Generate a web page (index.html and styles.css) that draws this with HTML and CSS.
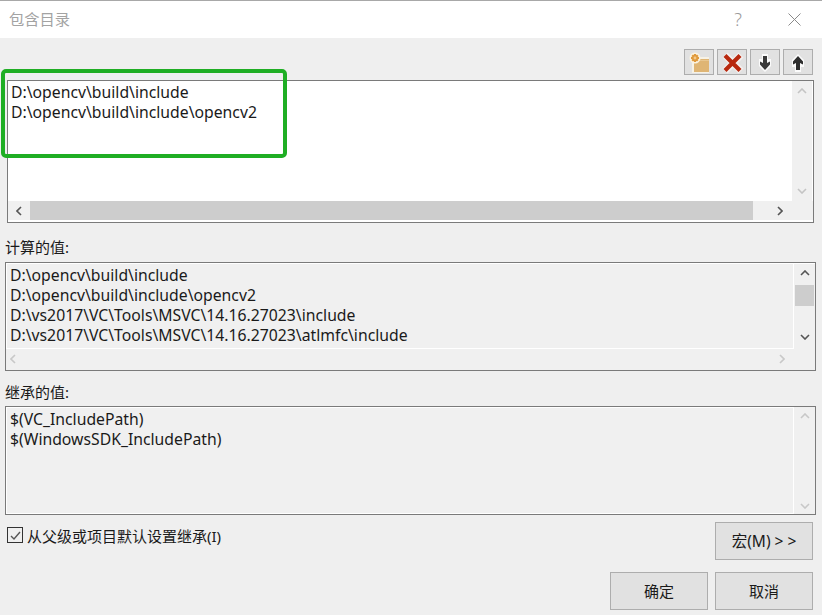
FILE: index.html
```html
<!DOCTYPE html>
<html lang="zh">
<head>
<meta charset="utf-8">
<title>包含目录</title>
<link rel="stylesheet" href="styles.css">
</head>
<body>
<div class="dialog">
  <header class="titlebar">
    <span class="title">包含目录</span>
    <span class="help">?</span>
    <svg class="close" width="13" height="13" viewBox="0 0 13 13"><path d="M0.500 0.500L12.500 12.500M12.500 0.500L0.500 12.500" stroke="#8a8a8a" stroke-width="1" fill="none"/></svg>
  </header>
  <main class="content">
    <div class="toolbar">
      <button class="tool"><svg width="28" height="24" viewBox="0 0 28 24"><path d="M7 7h17v16H7z" fill="#f7f2e6"/><path d="M9 9h15v13H9z" fill="#dfb574"/><path d="M8 8h6l2 2h8v1H8z" fill="#e8c68f"/><circle cx="10" cy="8" r="5.500" fill="#fbf3e2"/><g stroke="#e09a3c" stroke-width="2.200"><path d="M10 4v8M6 8h8M7.200 5.200l5.600 5.600M12.800 5.200l-5.600 5.600"/></g><circle cx="10" cy="8" r="1.400" fill="#f3c98a"/></svg></button>
      <button class="tool"><svg width="28" height="24" viewBox="0 0 28 24"><path d="M7 5L23 21M23 5L7 21" stroke="#f4f1f0" stroke-width="7" fill="none"/><path d="M7 5.500L22 20.500M22 5.500L7 20.500" stroke="#b8290f" stroke-width="4.200" fill="none"/></svg></button>
      <button class="tool"><svg width="28" height="24" viewBox="0 0 28 24"><path d="M11 4h6v5h3v7l-6 6-6-6V9h3z" fill="#fbfbfb"/><path d="M12 6h4v7l3-1.500v3L14 20l-5-5.500v-3l3 1.500z" fill="#3a3a3a"/></svg></button>
      <button class="tool"><svg width="28" height="24" viewBox="0 0 28 24"><path d="M11 22h6v-5h3v-7l-6-6-6 6v7h3z" fill="#fbfbfb"/><path d="M12 20h4v-7l3 1.500v-3L14 6l-5 5.500v3l3-1.500z" fill="#2e2e2e"/></svg></button>
    </div>

    <section class="list list-edit">
      <div class="list-main">
        <div class="list-text">
          <div class="line">D:\opencv\build\include</div>
          <div class="line">D:\opencv\build\include\opencv2</div>
        </div>
        <div class="vbar">
          <svg class="arrow" width="10" height="6" viewBox="0 0 10 6"><path d="M1 5l4-4 4 4" stroke="#c4c4c4" stroke-width="1.600" fill="none"/></svg>
          <svg class="arrow" width="10" height="6" viewBox="0 0 10 6"><path d="M1 1l4 4 4-4" stroke="#c4c4c4" stroke-width="1.600" fill="none"/></svg>
        </div>
      </div>
      <div class="hbar">
        <span class="hbtn"><svg width="6" height="10" viewBox="0 0 6 10"><path d="M5 1L1 5l4 4" stroke="#555" stroke-width="1.600" fill="none"/></svg></span>
        <span class="hthumb"></span>
        <span class="hrest"><svg width="6" height="10" viewBox="0 0 6 10"><path d="M1 1l4 4-4 4" stroke="#555" stroke-width="1.600" fill="none"/></svg></span>
      </div>
    </section>

    <div class="label label-computed">计算的值:</div>
    <section class="list list-read">
      <div class="list-main list-main-read">
        <div class="list-text">
          <div class="line">D:\opencv\build\include</div>
          <div class="line">D:\opencv\build\include\opencv2</div>
          <div class="line">D:\vs2017\VC\Tools\MSVC\14.16.27023\include</div>
          <div class="line">D:\vs2017\VC\Tools\MSVC\14.16.27023\atlmfc\include</div>
        </div>
        <div class="vbar vbar-read">
          <svg class="arrow" width="10" height="6" viewBox="0 0 10 6"><path d="M1 5l4-4 4 4" stroke="#555" stroke-width="1.600" fill="none"/></svg>
          <span class="vthumb"></span>
          <svg class="arrow arrow-down" width="10" height="6" viewBox="0 0 10 6"><path d="M1 1l4 4 4-4" stroke="#555" stroke-width="1.600" fill="none"/></svg>
        </div>
      </div>
      <div class="hbar hbar-read">
        <svg width="6" height="10" viewBox="0 0 6 10"><path d="M5 1L1 5l4 4" stroke="#c8c8c8" stroke-width="1.600" fill="none"/></svg>
        <svg width="6" height="10" viewBox="0 0 6 10"><path d="M1 1l4 4-4 4" stroke="#c8c8c8" stroke-width="1.600" fill="none"/></svg>
      </div>
    </section>

    <div class="label label-inherited">继承的值:</div>
    <section class="list list-inherit">
      <div class="list-text">
        <div class="line">$(VC_IncludePath)</div>
        <div class="line">$(WindowsSDK_IncludePath)</div>
      </div>
      <div class="vbar vbar-inherit">
        <svg class="arrow" width="10" height="6" viewBox="0 0 10 6"><path d="M1 5l4-4 4 4" stroke="#c8c8c8" stroke-width="1.600" fill="none"/></svg>
        <svg class="arrow" width="10" height="6" viewBox="0 0 10 6"><path d="M1 1l4 4 4-4" stroke="#c8c8c8" stroke-width="1.600" fill="none"/></svg>
      </div>
    </section>

    <div class="footer">
      <label class="check">
        <span class="box"><svg width="13" height="13" viewBox="0 0 13 13"><path d="M2 7l3 3 6-7" stroke="#555" stroke-width="1.400" fill="none"/></svg></span>
        <span>从父级或项目默认设置继承(I)</span>
      </label>
      <button class="btn btn-macro">宏(M) &gt; &gt;</button>
    </div>
    <div class="actions">
      <button class="btn">确定</button>
      <button class="btn">取消</button>
    </div>
  </main>
  <div class="annotation"></div>
</div>
</body>
</html>
```
FILE: styles.css
```css
* { box-sizing: border-box; }
html, body { margin: 0; padding: 0; }
body {
  width: 822px;
  height: 615px;
  overflow: hidden;
  background: #efefef;
  font-family: "Noto Sans", "Noto Sans CJK SC", sans-serif;
  font-size: 15.75px;
  color: #1a1a1a;
}
.dialog { position: relative; width: 822px; height: 615px; display: flex; flex-direction: column; }
.titlebar {
  height: 38px;
  flex: none;
  background: #fff;
  border-top: 1px solid #a8a8a8;
  display: flex;
  align-items: center;
  padding: 0 21px 1px 9px;
}
.title { font-family: "Noto Sans CJK SC", sans-serif; font-size: 15.250px; color: #a3a3a3; flex: 1; margin-bottom: 2px; }
.help { color: #9a9a9a; font-size: 18px; font-weight: 300; margin-right: 46px; }
.content { flex: 1; display: flex; flex-direction: column; padding: 11px 7px 0 5px; }
.toolbar { display: flex; justify-content: flex-end; gap: 3px; height: 26px; margin-right: 2px; }
.tool {
  width: 30px;
  height: 26px;
  padding: 0;
  background: #e1e1e1;
  border: 1px solid #adadad;
  display: flex;
  align-items: center;
  justify-content: center;
}
.list { border: 1px solid #7a7a7a; display: flex; flex-direction: column; }
.list-edit { height: 143px; margin: 5px 1px 0 2px; background: #f0f0f0; }
.list-main { flex: 1; display: flex; min-height: 0; }
.list-text { flex: 1; padding: 2px 3px; background: #fff; line-height: 20px; }
.list-edit .list-text { padding-top: 1px; }
.line { white-space: nowrap; height: 20px; }
.vbar {
  width: 21px;
  flex: none;
  background: #f0f0f0;
  display: flex;
  flex-direction: column;
  align-items: center;
  justify-content: space-between;
  padding: 7px 0;
}
.list-edit .vbar { border-right: 1px solid #fff; }
.hbar { height: 21px; flex: none; display: flex; align-items: flex-start; background: #f0f0f0; border-bottom: 2px solid #fff; }
.hbtn { width: 22px; height: 19px; flex: none; display: flex; justify-content: center; align-items: center; }
.hthumb { width: 723px; height: 19px; flex: none; background: #cdcdcd; }
.hrest { flex: 1; height: 19px; display: flex; justify-content: center; align-items: center; padding-right: 6px; }
.label { font-size: 15px; line-height: 20px; }
.label-computed { margin-top: 14px; }
.label-inherited { margin-top: 11px; }
.list-read { height: 109px; margin-top: 5px; background: #f0f0f0; width: 811px; }
.list-main-read { border: 1px solid #fff; border-width: 1px 0 0 1px; }
.list-main-read .list-text { background: #f0f0f0; border-right: 1px solid #fff; border-bottom: 1px solid #fff; padding: 1px 3px; overflow: hidden; }
.vbar-read { width: 21px; padding: 6px 0 0; justify-content: flex-start; }
.vthumb { width: 19px; height: 21px; background: #cdcdcd; margin-top: 9px; }
.arrow-down { margin-top: 28px; }
.hbar-read { height: 21px; align-items: center; justify-content: space-between; padding: 0 30px 0 4px; border-bottom: 1px solid #f0f0f0; }
.list-inherit { height: 109px; margin-top: 4px; width: 811px; flex-direction: row; background: #f0f0f0; }
.list-inherit .list-text { background: #f0f0f0; padding: 1px 3px; border: 1px solid #fff; }
.vbar-inherit { padding: 6px 0 5px; }
.footer { display: flex; justify-content: space-between; margin-top: 7px; height: 38px; padding-right: 2px; }
.check { display: flex; align-items: center; gap: 4px; height: 26px; margin-left: 2px; font-size: 15px; }
.box {
  width: 16px;
  height: 16px;
  border: 1px solid #333;
  display: flex;
  align-items: center;
  justify-content: center;
}
.btn {
  width: 98px;
  height: 38px;
  padding: 0 0 2px;
  background: #e1e1e1;
  border: 1px solid #adadad;
  font: inherit;
  font-size: 15px;
  color: #1a1a1a;
}
.btn-macro { font-size: 15.500px; }
.actions { display: flex; justify-content: flex-end; gap: 7px; margin-top: 12px; padding-right: 2px; }
.annotation {
  position: absolute;
  left: 1px;
  top: 69px;
  width: 286px;
  height: 89px;
  border: 4px solid #1fae24;
  border-radius: 5px;
}
```
